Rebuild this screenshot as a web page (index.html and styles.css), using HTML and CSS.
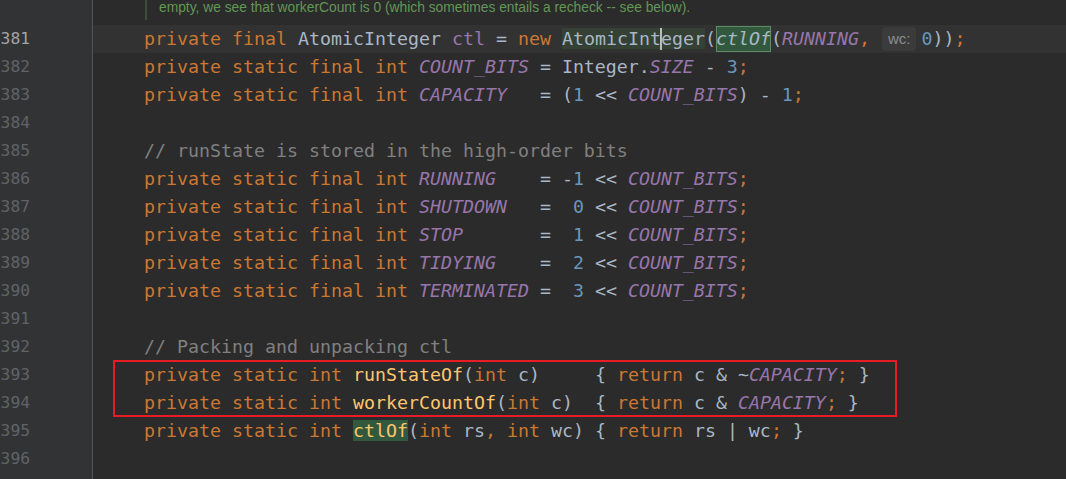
FILE: index.html
```html
<!DOCTYPE html>
<html>
<head>
<meta charset="utf-8">
<link rel="stylesheet" href="styles.css">
</head>
<body>
<div class="editor">
  <div class="gutter">
    <div class="gutter-top"></div>
    <div class="ln cur">381</div>
    <div class="ln">382</div>
    <div class="ln">383</div>
    <div class="ln">384</div>
    <div class="ln">385</div>
    <div class="ln">386</div>
    <div class="ln">387</div>
    <div class="ln">388</div>
    <div class="ln">389</div>
    <div class="ln">390</div>
    <div class="ln">391</div>
    <div class="ln">392</div>
    <div class="ln">393</div>
    <div class="ln">394</div>
    <div class="ln">395</div>
    <div class="ln">396</div>
  </div>
  <div class="code">
    <div class="doc"><span class="doc-bar"></span><span class="doc-text">empty, we see that workerCount is 0 (which sometimes entails a recheck -- see below).</span></div>
    <div class="line cur">    <span class="k">private final </span>AtomicInteger <span class="f">ctl</span> = <span class="k">new </span><span class="hl-id">AtomicInt<span class="caret"></span>eger</span>(<span class="hl-box"><i>ctlOf</i></span>(<span class="c">RUNNING</span><span class="k">, </span><span class="hint">wc:</span><span class="n">0</span>))<span class="k">;</span></div>
    <div class="line">    <span class="k">private static final int </span><span class="c">COUNT_BITS</span> = Integer.<span class="c">SIZE</span> - <span class="n">3</span><span class="k">;</span></div>
    <div class="line">    <span class="k">private static final int </span><span class="c">CAPACITY</span>   = (<span class="n">1</span> &lt;&lt; <span class="c">COUNT_BITS</span>) - <span class="n">1</span><span class="k">;</span></div>
    <div class="line"> </div>
    <div class="line">    <span class="cm">// runState is stored in the high-order bits</span></div>
    <div class="line">    <span class="k">private static final int </span><span class="c">RUNNING</span>    = -<span class="n">1</span> &lt;&lt; <span class="c">COUNT_BITS</span><span class="k">;</span></div>
    <div class="line">    <span class="k">private static final int </span><span class="c">SHUTDOWN</span>   =  <span class="n">0</span> &lt;&lt; <span class="c">COUNT_BITS</span><span class="k">;</span></div>
    <div class="line">    <span class="k">private static final int </span><span class="c">STOP</span>       =  <span class="n">1</span> &lt;&lt; <span class="c">COUNT_BITS</span><span class="k">;</span></div>
    <div class="line">    <span class="k">private static final int </span><span class="c">TIDYING</span>    =  <span class="n">2</span> &lt;&lt; <span class="c">COUNT_BITS</span><span class="k">;</span></div>
    <div class="line">    <span class="k">private static final int </span><span class="c">TERMINATED</span> =  <span class="n">3</span> &lt;&lt; <span class="c">COUNT_BITS</span><span class="k">;</span></div>
    <div class="line"> </div>
    <div class="line">    <span class="cm">// Packing and unpacking ctl</span></div>
    <div class="boxed">
      <div class="line">    <span class="k">private static int </span><span class="m">runStateOf</span>(<span class="k">int </span>c)     { <span class="k">return </span>c &amp; ~<span class="c">CAPACITY</span><span class="k">;</span> }</div>
      <div class="line">    <span class="k">private static int </span><span class="m">workerCountOf</span>(<span class="k">int </span>c)  { <span class="k">return </span>c &amp; <span class="c">CAPACITY</span><span class="k">;</span> }</div>
      <div class="red-box"></div>
    </div>
    <div class="line">    <span class="k">private static int </span><span class="m hl-use">ctlOf</span>(<span class="k">int </span>rs<span class="k">, int </span>wc) { <span class="k">return </span>rs | wc<span class="k">;</span> }</div>
    <div class="line"> </div>
  </div>
</div>
</body>
</html>
```

FILE: styles.css
```css
html, body {
  margin: 0;
  padding: 0;
  background: #2b2b2b;
}

.editor {
  display: flex;
  width: 1066px;
  height: 479px;
  overflow: hidden;
  background: #2b2b2b;
}

.gutter {
  box-sizing: border-box;
  width: 93px;
  flex: none;
  background: #313335;
  border-right: 1px solid #555555;
  font-family: "DejaVu Sans Mono", "Liberation Mono", monospace;
  font-size: 16.3px;
  color: #606366;
}

.gutter-top {
  height: 25px;
}

.ln {
  height: 28px;
  line-height: 28px;
  width: 30px;
  text-align: right;
}

.ln.cur {
  color: #a4a3a3;
}

.code {
  flex: 1;
  font-family: "DejaVu Sans Mono", "Liberation Mono", monospace;
  font-size: 18.27px;
  color: #a9b7c6;
}

.doc {
  height: 25px;
  display: flex;
  align-items: flex-start;
  padding-left: 52px;
}

.doc-bar {
  width: 2px;
  height: 20px;
  background: #3c4d39;
  flex: none;
}

.doc-text {
  font-family: "Liberation Sans", Arial, sans-serif;
  font-size: 13.8px;
  line-height: 16px;
  color: #629755;
  margin-left: 12px;
}

.line {
  height: 28px;
  line-height: 28px;
  white-space: pre;
  padding-left: 7px;
}

.line.cur {
  background: #323232;
}

.k { color: #cc7832; }
.f { color: #9876aa; }
.c { color: #9876aa; font-style: italic; }
.n { color: #6897bb; }
.cm { color: #808080; }
.m { color: #ffc66d; }

.hl-id {
  background: #344134;
}

.caret {
  display: inline-block;
  width: 0;
  height: 22px;
  vertical-align: -5px;
  border-left: 2px solid #bbbbbb;
  margin-left: -1px;
  margin-right: -1px;
}

.hl-box {
  background: #32593d;
  outline: 1px solid #5f8c66;
  outline-offset: -1px;
  display: inline-block;
  line-height: 26px;
  height: 26px;
  vertical-align: top;
  margin-top: 1px;
}

.hl-box i {
  font-style: italic;
}

.hint {
  display: inline-block;
  font-family: "Liberation Sans", Arial, sans-serif;
  font-size: 15px;
  color: #8c8c8c;
  background: #3b3b3b;
  border-radius: 4px;
  height: 24px;
  line-height: 24px;
  vertical-align: top;
  margin-top: 2px;
  padding: 0 6px;
  margin-left: 1px;
  margin-right: 5px;
}

.hl-use {
  background: #32593d;
}

.boxed {
  position: relative;
}

.red-box {
  position: absolute;
  left: 20px;
  top: -1px;
  width: 780px;
  height: 53px;
  border: 2px solid #e81c24;
}
```
